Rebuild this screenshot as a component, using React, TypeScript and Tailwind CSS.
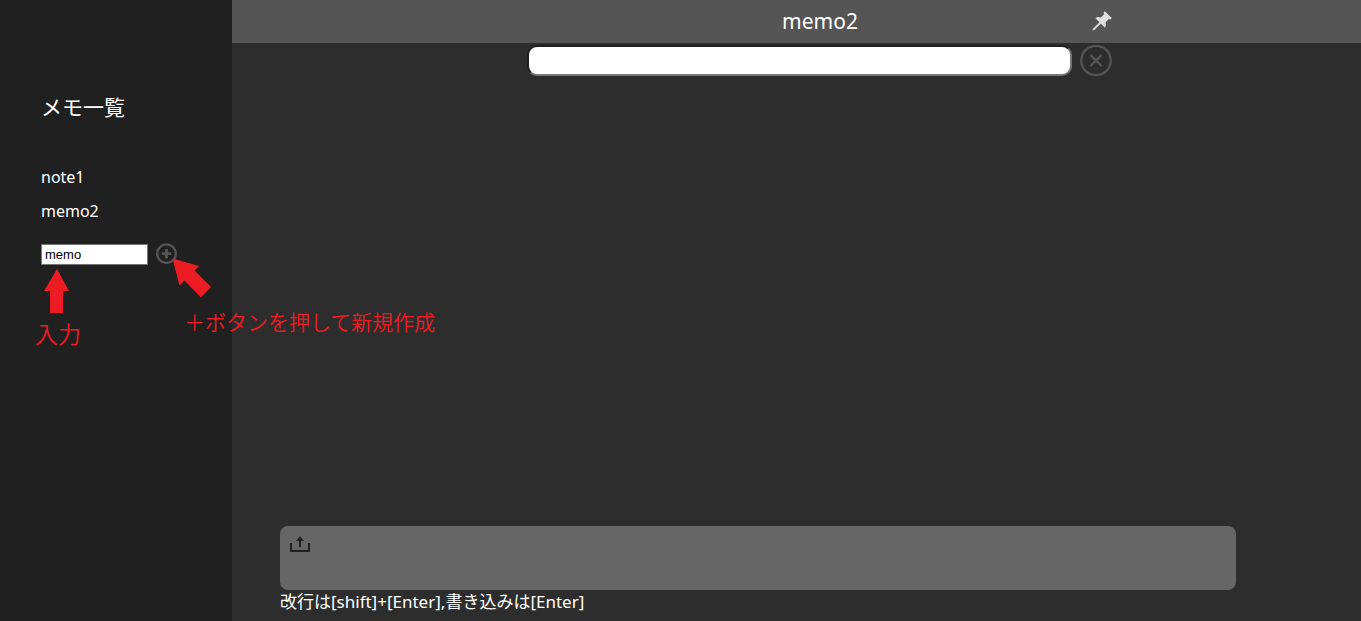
import { useState } from "react";

const notes = ["note1", "memo2"];

function PlusCircle() {
  return (
    <svg viewBox="0 0 22 22" className="block size-[22px]" fill="none" stroke="#555555" aria-hidden="true">
      <circle cx="10.5" cy="10.7" r="9.3" strokeWidth="2.4" />
      <path d="M10.5 6v9.4M5.8 10.7h9.4" strokeWidth="2.8" />
    </svg>
  );
}

function CloseCircle() {
  return (
    <svg viewBox="0 0 32 32" className="block size-8" fill="none" stroke="#555555" aria-hidden="true">
      <circle cx="16" cy="15.5" r="14.7" strokeWidth="2.2" />
      <path d="M10.5 10l11 11M21.5 10l-11 11" strokeWidth="2.4" />
    </svg>
  );
}

function Pin() {
  return (
    <svg viewBox="0 0 20 20" className="block size-5" fill="#dddddd" aria-hidden="true">
      <path d="M12.8 0.2L19.8 7L18.3 8.5L16.8 8L13.6 11.3Q14.6 14.4 13 16.8L8.9 12.8L2.2 19L0.5 19.4L0.9 17.7L7.5 11.3L3.4 7.2Q5.8 5.4 8.8 6.4L12.1 3.2L11.5 1.7Z" />
    </svg>
  );
}

function Upload() {
  return (
    <svg viewBox="0 0 20 17" className="block h-[17px] w-5" fill="none" stroke="#202020" aria-hidden="true">
      <path d="M1 7v8h18V7" strokeWidth="2" strokeLinejoin="round" />
      <path d="M10 11V3" strokeWidth="2" />
      <path d="M6 5L10 0.3L14 5Z" fill="#202020" stroke="none" />
    </svg>
  );
}

export default function App() {
  const [name, setName] = useState("memo");

  return (
    <div className="flex min-h-screen bg-[#2d2d2d] font-['Noto_Sans','Noto_Sans_CJK_JP',sans-serif] text-base text-white">
      <aside className="relative z-10 w-58 shrink-0 bg-[#202020] px-[41px] pt-[92px]">
        <h1 className="text-[21px] leading-[30px]">メモ一覧</h1>
        <ul className="mt-[38px]">
          {notes.map((note) => (
            <li key={note} className="h-[34px] leading-[34px]">
              <a href={`#${note}`}>{note}</a>
            </li>
          ))}
        </ul>
        <form className="mt-[15px] flex items-center gap-2" onSubmit={(e) => e.preventDefault()}>
          <input
            aria-label="メモ名"
            value={name}
            onChange={(e) => setName(e.target.value)}
            className="h-[21px] w-[107px] border border-[#767676] bg-white px-[3px] font-['Liberation_Sans',sans-serif] text-[13px] text-black"
          />
          <button type="submit" aria-label="新規作成">
            <PlusCircle />
          </button>
        </form>

        <div className="absolute top-[269px] left-[35px] text-[#ed1c24]">
          <svg viewBox="0 0 26 44" className="ml-2 block h-11 w-[26px]" fill="#ed1c24" aria-hidden="true">
            <path d="M14 0L26 22H20V44H7V22H1Z" />
          </svg>
          <p className="mt-0.5 font-['Noto_Sans_CJK_JP',sans-serif] text-[23px] leading-9 font-[350]">入力</p>
        </div>
        <div className="absolute top-[258px] left-[172px]">
          <svg viewBox="0 0 40 40" className="block size-10" fill="#ed1c24" aria-hidden="true">
            <path d="M0.5 0.5L27 8L22.5 12.5L39 29L29 39.5L12.5 22.5L7.5 27.5Z" />
          </svg>
        </div>
        <p className="absolute top-[303px] left-[184px] font-['Noto_Sans_CJK_JP',sans-serif] text-[21px] leading-9 font-[350] whitespace-nowrap text-[#ed1c24]">
          ＋ボタンを押して新規作成
        </p>
      </aside>

      <main className="flex min-w-0 flex-1 flex-col">
        <header className="flex h-[43px] items-center bg-[#555555] pr-[249px] pb-0.5 pl-[296px]">
          <div className="w-5" />
          <h2 className="flex-1 text-center text-[21px] leading-[30px]">memo2</h2>
          <button type="button" aria-label="ピン留め">
            <Pin />
          </button>
        </header>
        <form className="flex items-start gap-2 pt-0.5 pr-[249px] pl-[295px]" onSubmit={(e) => e.preventDefault()}>
          <input
            type="search"
            aria-label="検索"
            className="h-[31px] min-w-0 flex-1 appearance-none rounded-[10px] border-2 border-t-[#202020] border-r-[#767676] border-b-[#767676] border-l-[#202020] bg-white px-2 text-black"
          />
          <button type="button" aria-label="閉じる">
            <CloseCircle />
          </button>
        </form>
        <div className="flex-1" />
        <form className="pr-[125px] pb-2 pl-12" onSubmit={(e) => e.preventDefault()}>
          <div className="flex h-16 items-start gap-2 rounded-lg bg-[#666666] px-2.5 pt-2">
            <button type="button" aria-label="アップロード" className="pt-0.5">
              <Upload />
            </button>
            <textarea aria-label="書き込み" className="h-12 flex-1 resize-none bg-transparent outline-none" />
          </div>
          <p className="text-[17px] leading-[23px]">改行は[shift]+[Enter],書き込みは[Enter]</p>
        </form>
      </main>
    </div>
  );
}
